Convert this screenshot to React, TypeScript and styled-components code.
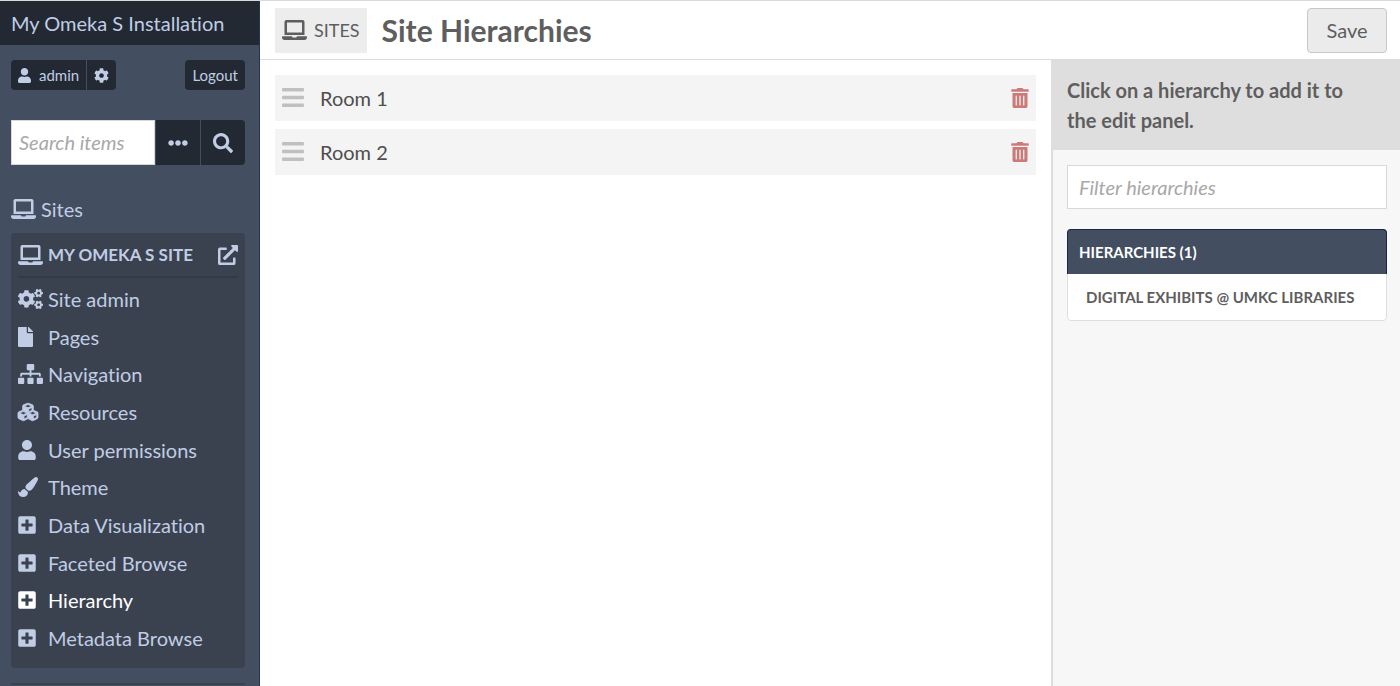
import React from 'react';
import styled, { createGlobalStyle } from 'styled-components';
import {
  FaBars, FaCog, FaCogs, FaCubes, FaEllipsisH, FaExternalLinkAlt, FaFile, FaLaptop,
  FaPaintBrush, FaPlusSquare, FaSearch, FaSitemap, FaTrashAlt, FaUser,
} from 'react-icons/fa';

const pale = '#c0cde4';
const night = '#222933';

const GlobalStyle = createGlobalStyle`
  *, *::before, *::after { box-sizing: border-box; }
  body {
    margin: 0;
    background: #fff;
    color: #5e5e5e;
    font: 20px/30px Lato, "Open Sans", sans-serif;
    font-variant-ligatures: none;
  }
  a { color: inherit; text-decoration: none; }
  h1, h2, h3, p, ul { margin: 0; padding: 0; font: inherit; font-variant-ligatures: none; }
  ul { list-style: none; }
  button, input { font: inherit; font-variant-ligatures: none; color: inherit; margin: 0; }
  button { cursor: pointer; }
`;

/* Each icon keeps the natural proportions of its drawing. */
const Glyph = styled.span<{ $width: number; $height?: number }>`
  display: block;
  flex: none;
  svg {
    display: block;
    width: ${({ $width }) => $width}px;
    height: ${({ $height = 20 }) => $height}px;
  }
`;

const Page = styled.div`
  display: grid;
  grid-template-columns: 260px minmax(0, 1fr);
  min-height: 100vh;
  border-top: 1px solid #d8dad8;
`;

const Sidebar = styled.header`
  background: #434e60;
  border-right: 1px solid #24364f;
  color: ${pale};
`;

const Brand = styled.div`
  padding: 7px 11px;
  background: ${night};
`;

const SidebarBody = styled.div`
  padding: 15px 14px 0 11px;
`;

const UserBar = styled.div`
  display: flex;
  justify-content: space-between;
  font-size: 15px;
`;

const ButtonGroup = styled.div`
  display: flex;
  gap: 1px;
  border-radius: 4px;
  overflow: hidden;
`;

const DarkLink = styled.a`
  display: flex;
  align-items: center;
  gap: 8px;
  height: 30px;
  padding: 0 7px;
  background: ${night};
`;

const Search = styled.form`
  display: flex;
  gap: 1px;
  height: 45px;
  margin-top: 30px;
  border-radius: 0 4px 4px 0;
  overflow: hidden;
`;

const SearchInput = styled.input`
  flex: 1;
  min-width: 0;
  padding: 0 7px 1px;
  border: 1px solid #d8d8d8;
  border-radius: 0;
  background: #fff;
  color: #5e5e5e;
  &::placeholder { color: #a8a8a8; font-style: italic; opacity: 1; }
`;

const SearchButton = styled.button`
  display: flex;
  align-items: center;
  justify-content: center;
  width: 44px;
  padding: 0;
  border: 0;
  background: ${night};
  color: ${pale};
`;

const SitesLink = styled.a`
  display: flex;
  align-items: center;
  gap: 5px;
  margin-top: 29px;
`;

const SitePanel = styled.nav`
  margin-top: 9px;
  padding: 7px 7px 11px;
  border-radius: 4px;
  background: #3a4250;
`;

const SiteTitle = styled.h2`
  display: flex;
  align-items: center;
  justify-content: space-between;
  margin-bottom: 2px;
  padding-bottom: 6px;
  border-bottom: 2px solid #323a47;
  font-size: 17px;
  font-weight: 700;
  text-transform: uppercase;
`;

const NavLink = styled.a<{ $active?: boolean }>`
  display: flex;
  align-items: center;
  color: ${({ $active }) => ($active ? '#fff' : pale)};
`;

const NavList = styled.ul`
  display: grid;
  grid-auto-rows: 1fr;
  align-items: center;
  height: 377px;
`;

const IconSlot = styled.span`
  display: flex;
  flex: none;
  width: 30px;
`;

/* The lines of the cubes are drawn heavier than the package has them. */
const Cubes = styled(FaCubes)`
  overflow: visible;
  stroke: currentColor;
  stroke-width: 22px;
`;

const Divider = styled.hr`
  height: 2px;
  margin: 15px 0 0;
  border: 0;
  background: #3a4250;
`;

const Main = styled.div`
  display: flex;
  flex-direction: column;
`;

const TitleBar = styled.div`
  display: flex;
  align-items: center;
  height: 59px;
  padding: 0 13px 0 15px;
  border-bottom: 1px solid #dcdcdc;
`;

const Crumb = styled.a`
  display: flex;
  align-items: center;
  gap: 7px;
  height: 45px;
  padding: 0 7px;
  background: #ededed;
  font-size: 18px;
  text-transform: uppercase;
`;

const PageTitle = styled.h1`
  flex: 1;
  margin-left: 15px;
  font-size: 30px;
  font-weight: 700;
`;

const SaveButton = styled.button`
  width: 80px;
  height: 45px;
  padding: 0;
  border: 1px solid #c8c8c8;
  border-radius: 4px;
  background: #ebebeb;
`;

const Columns = styled.div`
  display: grid;
  flex: 1;
  grid-template-columns: minmax(0, 1fr) 349px;
`;

const Blocks = styled.ul`
  display: flex;
  flex-direction: column;
  gap: 8px;
  padding: 15px;
`;

const Block = styled.li`
  display: flex;
  align-items: center;
  height: 46px;
  padding: 0 7px 1px;
  background: #f4f4f4;
  color: #4e4e4e;
`;

const Handle = styled.span`
  width: 38px;
  color: #c0c0c0;
`;

const BlockName = styled.span`
  flex: 1;
`;

const DeleteButton = styled.button`
  padding: 0;
  border: 0;
  background: none;
  color: #c97a79;
`;

const Aside = styled.aside`
  border-left: 2px solid #dedede;
  background: #f7f7f7;
`;

const Hint = styled.p`
  padding: 15px 30px 15px 14px;
  background: #dedede;
  font-weight: 700;
`;

const AsideBody = styled.div`
  padding: 15px 13px 15px 14px;
`;

const FilterInput = styled.input`
  display: block;
  width: 100%;
  height: 44px;
  padding: 0 11px;
  border: 1px solid #d8d8d8;
  border-radius: 0;
  background: #fff;
  &::placeholder { color: #a8a8a8; font-style: italic; opacity: 1; }
`;

const Group = styled.section`
  margin-top: 20px;
  border: 1px solid #dedede;
  border-radius: 4px;
  background: #fff;
  font-size: 15px;
  font-weight: 700;
  text-transform: uppercase;
`;

const GroupTitle = styled.h3`
  margin: -1px -1px 0;
  padding: 7px 11px;
  border: 1px solid #12294d;
  border-bottom: 0;
  border-radius: 4px 4px 0 0;
  background: #434e60;
  color: #fff;
`;

const GroupItem = styled.button`
  display: block;
  width: 100%;
  padding: 8px 18px;
  border: 0;
  border-radius: 4px;
  background: #fff;
  text-align: left;
  text-transform: inherit;
`;

const links = [
  { label: 'Site admin', Icon: FaCogs, width: 25 },
  { label: 'Pages', Icon: FaFile, width: 15 },
  { label: 'Navigation', Icon: FaSitemap, width: 25 },
  { label: 'Resources', Icon: Cubes, width: 20 },
  { label: 'User permissions', Icon: FaUser, width: 18 },
  { label: 'Theme', Icon: FaPaintBrush, width: 20 },
  { label: 'Data Visualization', Icon: FaPlusSquare, width: 18 },
  { label: 'Faceted Browse', Icon: FaPlusSquare, width: 18 },
  { label: 'Hierarchy', Icon: FaPlusSquare, width: 18, active: true },
  { label: 'Metadata Browse', Icon: FaPlusSquare, width: 18 },
];

export default function App() {
  return (
    <>
      <GlobalStyle />
      <Page>
        <Sidebar>
          <Brand><a href="#home">My Omeka S Installation</a></Brand>
          <SidebarBody>
            <UserBar>
              <ButtonGroup>
                <DarkLink href="#admin"><Glyph $width={13} $height={15}><FaUser /></Glyph>admin</DarkLink>
                <DarkLink href="#settings" aria-label="User settings"><Glyph $width={15} $height={15}><FaCog /></Glyph></DarkLink>
              </ButtonGroup>
              <ButtonGroup><DarkLink href="#logout">Logout</DarkLink></ButtonGroup>
            </UserBar>
            <Search role="search" onSubmit={(e) => e.preventDefault()}>
              <SearchInput type="text" placeholder="Search items" aria-label="Search items" />
              <SearchButton type="button" aria-label="Advanced options"><Glyph $width={20}><FaEllipsisH /></Glyph></SearchButton>
              <SearchButton type="submit" aria-label="Search"><Glyph $width={20}><FaSearch /></Glyph></SearchButton>
            </Search>
            <SitesLink href="#sites"><Glyph $width={25}><FaLaptop /></Glyph>Sites</SitesLink>
            <SitePanel aria-label="Site">
              <SiteTitle>
                <NavLink href="#site"><IconSlot><Glyph $width={25}><FaLaptop /></Glyph></IconSlot>My Omeka S Site</NavLink>
                <a href="#view" aria-label="View site"><Glyph $width={20}><FaExternalLinkAlt /></Glyph></a>
              </SiteTitle>
              <NavList>
                {links.map(({ label, Icon, width, active }) => (
                  <li key={label}>
                    <NavLink href="#nav" $active={active}>
                      <IconSlot><Glyph $width={width}><Icon /></Glyph></IconSlot>{label}
                    </NavLink>
                  </li>
                ))}
              </NavList>
            </SitePanel>
            <Divider />
          </SidebarBody>
        </Sidebar>
        <Main>
          <TitleBar>
            <Crumb href="#sites"><Glyph $width={25}><FaLaptop /></Glyph>Sites</Crumb>
            <PageTitle>Site Hierarchies</PageTitle>
            <SaveButton type="button">Save</SaveButton>
          </TitleBar>
          <Columns>
            <Blocks>
              {['Room 1', 'Room 2'].map((name) => (
                <Block key={name}>
                  <Handle><Glyph $width={22} $height={25}><FaBars /></Glyph></Handle>
                  <BlockName>{name}</BlockName>
                  <DeleteButton type="button" aria-label={`Remove ${name}`}><Glyph $width={18}><FaTrashAlt /></Glyph></DeleteButton>
                </Block>
              ))}
            </Blocks>
            <Aside>
              <Hint>Click on a hierarchy to add it to the edit panel.</Hint>
              <AsideBody>
                <FilterInput type="text" placeholder="Filter hierarchies" aria-label="Filter hierarchies" />
                <Group>
                  <GroupTitle>Hierarchies (1)</GroupTitle>
                  <GroupItem type="button">Digital Exhibits @ UMKC Libraries</GroupItem>
                </Group>
              </AsideBody>
            </Aside>
          </Columns>
        </Main>
      </Page>
    </>
  );
}
